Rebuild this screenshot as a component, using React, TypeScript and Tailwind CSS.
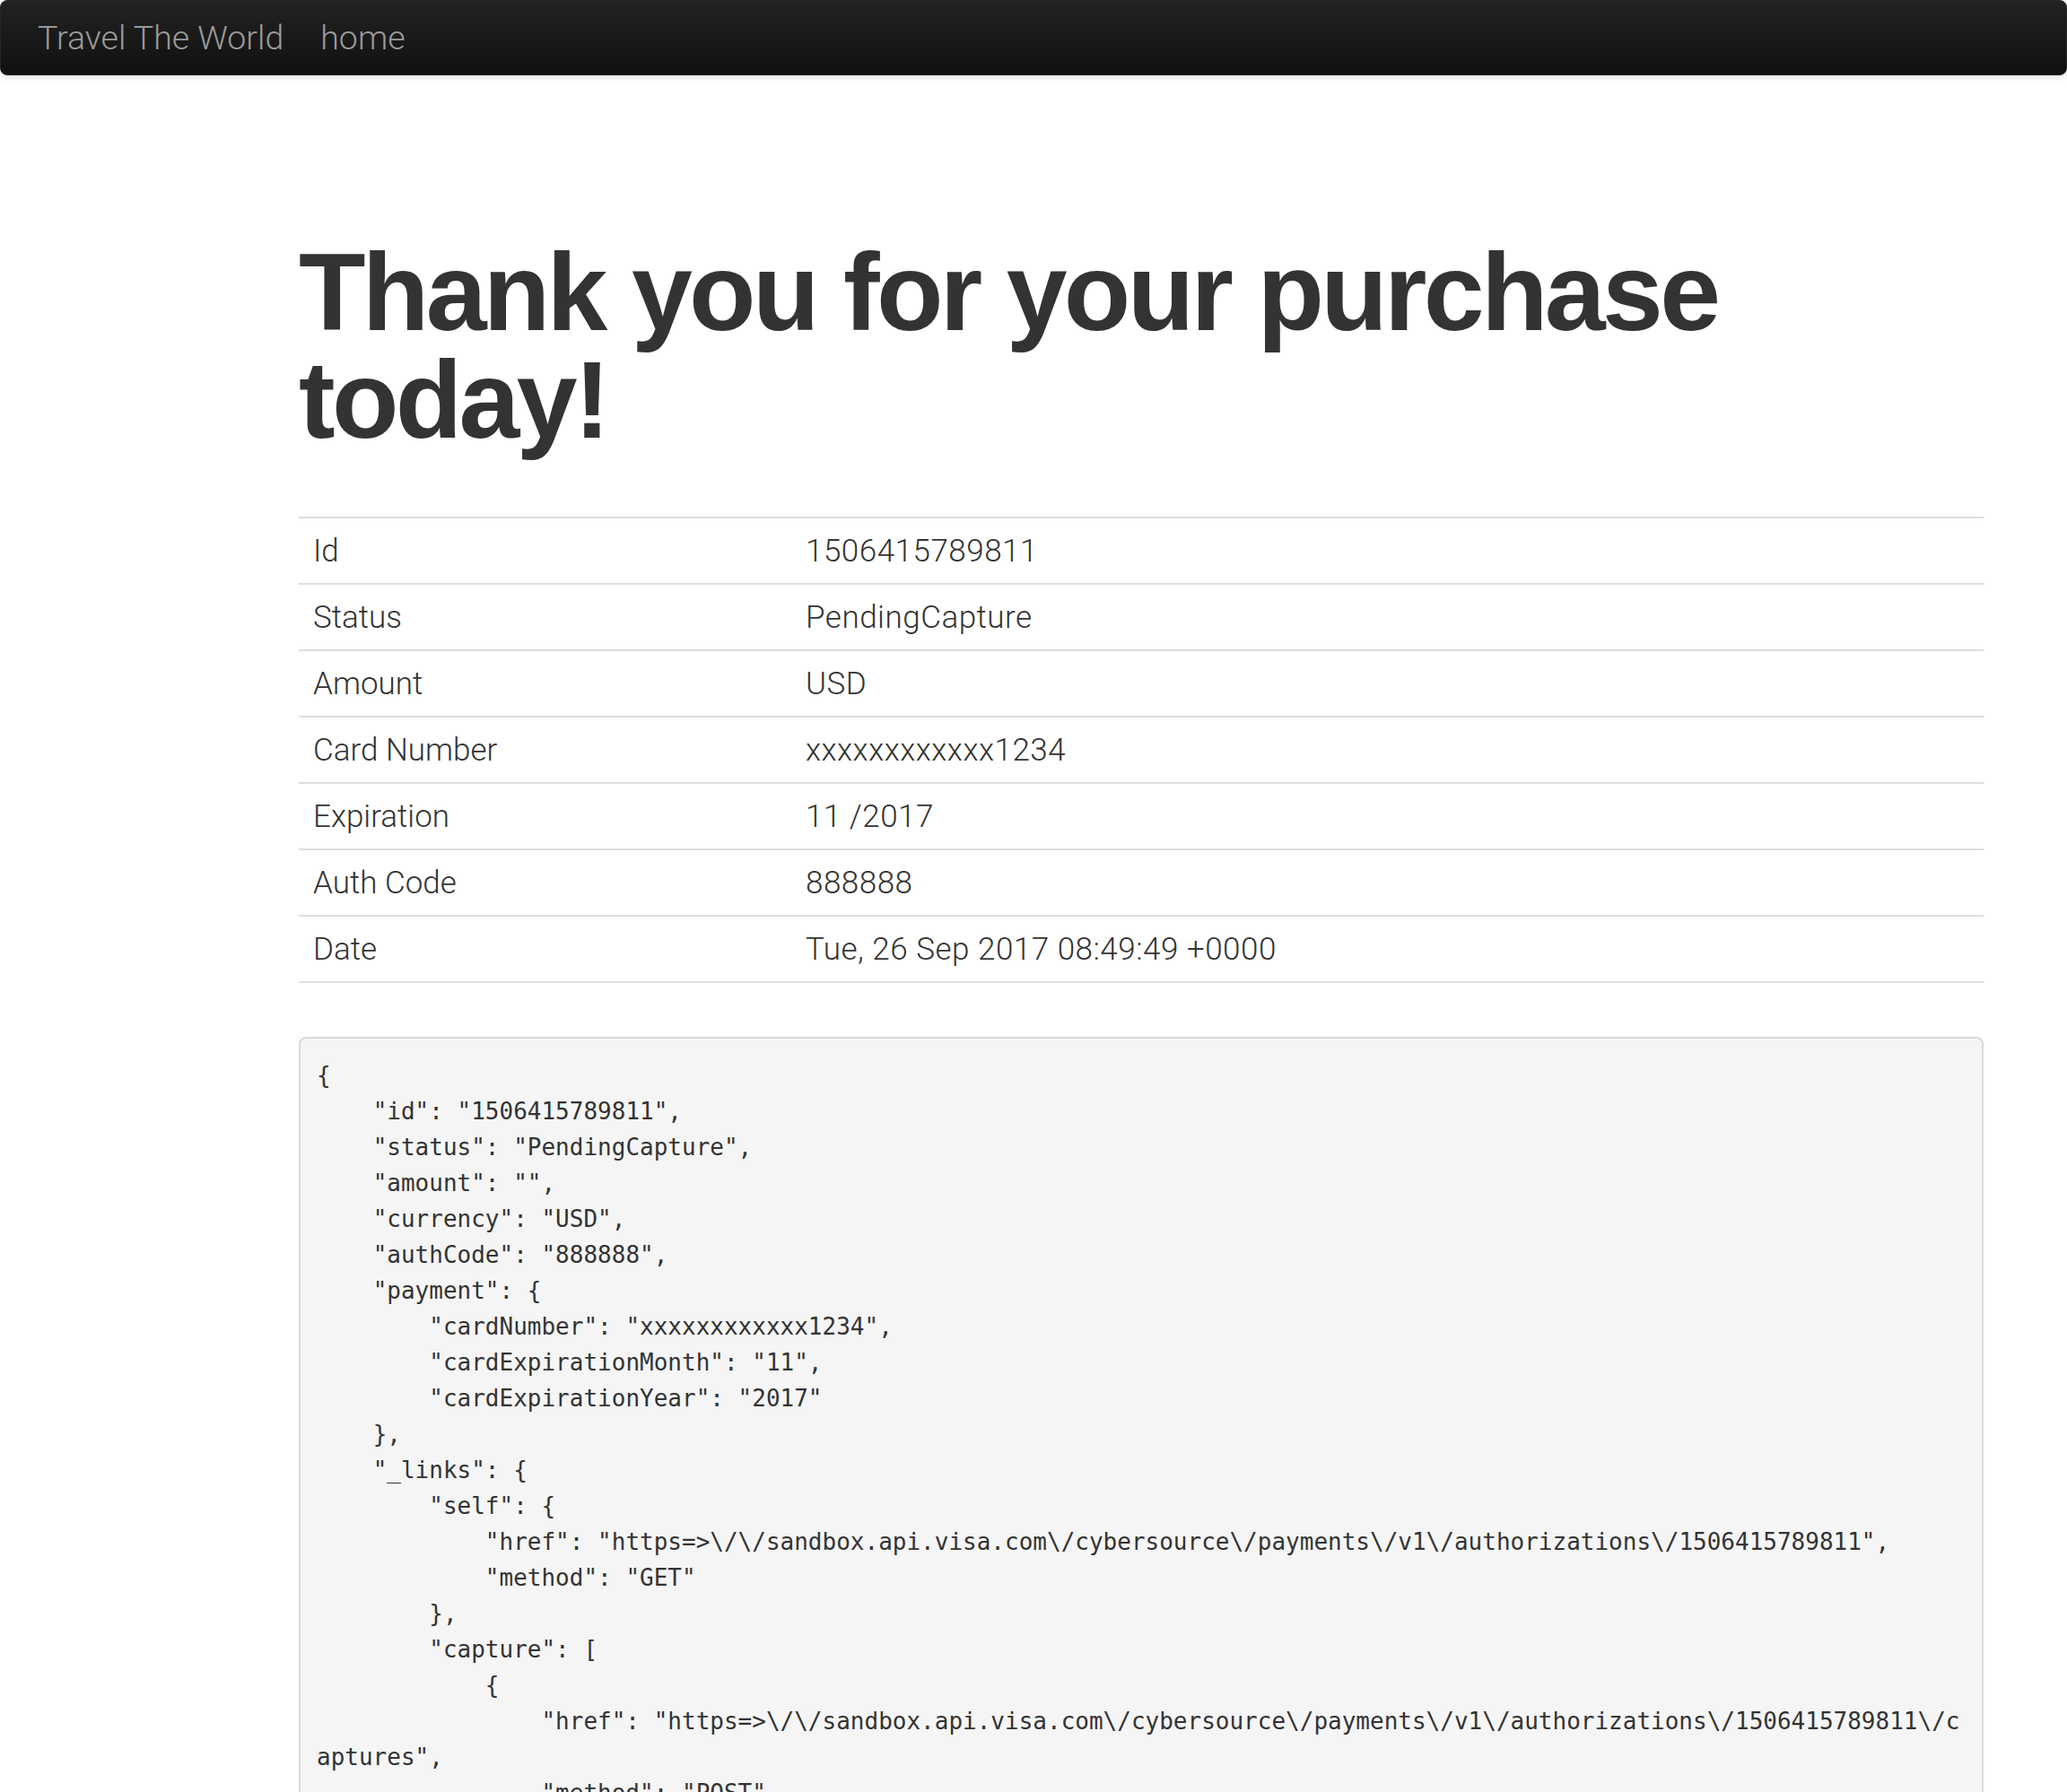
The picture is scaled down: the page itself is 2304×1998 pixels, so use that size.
import React from "react";

const rows: [string, string][] = [
  ["Id", "1506415789811"],
  ["Status", "PendingCapture"],
  ["Amount", "USD"],
  ["Card Number", "xxxxxxxxxxxx1234"],
  ["Expiration", "11 /2017"],
  ["Auth Code", "888888"],
  ["Date", "Tue, 26 Sep 2017 08:49:49 +0000"],
];

const json = `{
    "id": "1506415789811",
    "status": "PendingCapture",
    "amount": "",
    "currency": "USD",
    "authCode": "888888",
    "payment": {
        "cardNumber": "xxxxxxxxxxxx1234",
        "cardExpirationMonth": "11",
        "cardExpirationYear": "2017"
    },
    "_links": {
        "self": {
            "href": "https=>\\/\\/sandbox.api.visa.com\\/cybersource\\/payments\\/v1\\/authorizations\\/1506415789811",
            "method": "GET"
        },
        "capture": [
            {
                "href": "https=>\\/\\/sandbox.api.visa.com\\/cybersource\\/payments\\/v1\\/authorizations\\/1506415789811\\/captures",
                "method": "POST"
            }
        ],
        "reversal": [
            {
                "href": "https=>\\/\\/sandbox.api.visa.com\\/cybersource\\/payments\\/v1\\/authorizations\\/1506415789811\\/reversals",
                "method": "POST"
            }
        ]
    }
}`;

export default function App() {
  return (
    <div className="min-h-[1998px] bg-white">
      <div className="h-[84px] rounded-[8px] bg-linear-to-b from-[#222222] to-[#111111] border border-[#252525] shadow-[0_2px_8px_rgba(0,0,0,0.12)] flex items-center pl-[41px] font-['Roboto'] font-light text-[#9a9a9a] text-[37.5px]">
        <span>Travel The World</span>
        <span className="ml-[41px]">home</span>
      </div>
      <div className="ml-[333px] w-[1878px]">
        <h1 className="mt-[182px] font-['Liberation_Sans'] font-bold text-[122px] leading-[120px] tracking-[-3.7px] text-[#333333]">
          Thank you for your purchase today!
        </h1>
        <table className="mt-[70px] w-full border-b-2 border-[#dddddd] font-['Roboto'] font-light text-[35px] leading-[40px] text-[#333333]">
          <tbody>
            {rows.map(([k, v]) => (
              <tr key={k} className="border-t-2 border-[#dddddd]">
                <td className="w-[549px] px-[16px] pt-[17px] pb-[15px] text-left align-top">{k}</td>
                <td className="px-[16px] pt-[17px] pb-[15px] text-left align-top tracking-[0.5px]">{v}</td>
              </tr>
            ))}
          </tbody>
        </table>
        <pre className="mt-[60px] whitespace-pre-wrap break-all bg-[#f5f5f5] border-2 border-[#d9d9d9] rounded-[8px] pt-[21px] pb-[18px] px-[18px] font-['DejaVu_Sans_Mono'] text-[26px] leading-[40px] text-[#333333]">
          {json}
        </pre>
      </div>
    </div>
  );
}
